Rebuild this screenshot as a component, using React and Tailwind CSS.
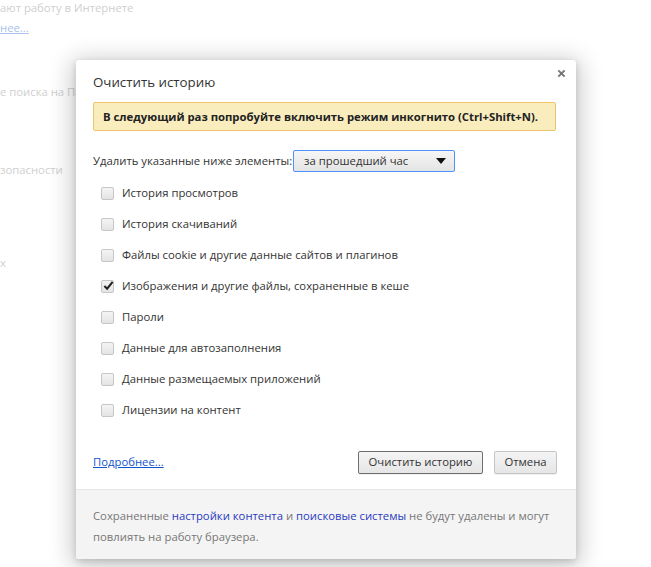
import React from 'react'

const items = [
	{label: 'История просмотров', checked: false},
	{label: 'История скачиваний', checked: false},
	{label: 'Файлы cookie и другие данные сайтов и плагинов', checked: false},
	{label: 'Изображения и другие файлы, сохраненные в кеше', checked: true},
	{label: 'Пароли', checked: false},
	{label: 'Данные для автозаполнения', checked: false},
	{label: 'Данные размещаемых приложений', checked: false},
	{label: 'Лицензии на контент', checked: false},
]

function Checkbox({checked}) {
	return (
		<span className="relative flex h-[13px] w-[13px] shrink-0 items-center justify-center rounded-[2px] border border-[#c6c6c6] bg-gradient-to-b from-[#f4f4f4] to-[#e4e4e4]">
			{checked && (
				<svg
					viewBox="0 0 12 12"
					className="absolute -top-[1px] left-[1px] h-[11px] w-[11px]"
				>
					<path
						d="M1.5 6.5 L4.5 9.5 L10.5 2"
						fill="none"
						stroke="#222"
						strokeWidth="2.2"
					/>
				</svg>
			)}
		</span>
	)
}

export default function App() {
	return (
		<div className="relative h-[567px] w-[651px] overflow-hidden bg-white font-['Open_Sans',sans-serif] text-[11.3px] text-[#cfcfcf]">
			{/* faded settings page behind the overlay */}
			<div className="flex flex-col">
				<div className="leading-[16px]">ают работу в Интернете</div>
				<div className="mt-[4px] leading-[16px] text-[#a9c1ec] underline">нее...</div>
				<div className="mt-[48px] leading-[16px]">е поиска на Пар</div>
				<div className="mt-[62px] leading-[16px]">зопасности</div>
				<div className="mt-[77px] leading-[16px]">х</div>
			</div>

			<div className="absolute left-[76px] top-[60px] flex w-[500px] flex-col overflow-hidden rounded-[3px] bg-white text-[#333] shadow-[0_4px_23px_5px_rgba(0,0,0,0.2),0_2px_6px_rgba(0,0,0,0.15)]">
				<div className="relative px-[17px] pt-[12px]">
					<div className="text-[13.3px] leading-[20px] text-[#333]">Очистить историю</div>
					<svg
						viewBox="0 0 10 10"
						className="absolute right-[10px] top-[9px] h-[9px] w-[9px]"
					>
						<path
							d="M1.5 1.5 L8.5 8.5 M8.5 1.5 L1.5 8.5"
							stroke="#777"
							strokeWidth="2.2"
						/>
					</svg>

					<div className="mr-[3px] mt-[10px] rounded-[2px] border border-[#f0c36d] bg-[#f9edbe] px-[9px] py-[5px] text-[11.3px] font-bold leading-[17px] text-[#222]">
						В следующий раз попробуйте включить режим инкогнито (Ctrl+Shift+N).
					</div>

					<div className="mt-[19px] flex h-[22px] items-center gap-[1px]">
						<span>Удалить указанные ниже элементы:</span>
						<div className="flex h-[22px] w-[162px] items-center justify-between rounded-[2px] border border-[#4d90fe] bg-gradient-to-b from-[#f6f6f6] to-[#e4e4e4] pl-[10px] pr-[8px] text-[#333]">
							<span>за прошедший час</span>
							<svg
								viewBox="0 0 10 6"
								className="h-[6px] w-[10px]"
							>
								<path
									d="M0 0 H10 L5 6 Z"
									fill="#111"
								/>
							</svg>
						</div>
					</div>

					<div className="mt-[6px] flex flex-col pl-[8px]">
						{items.map(item => (
							<div
								key={item.label}
								className="flex h-[31px] items-center gap-[8px]"
							>
								<Checkbox checked={item.checked} />
								<span>{item.label}</span>
							</div>
						))}
					</div>

					<div className="mt-[25px] flex items-center justify-between pb-[15px] pr-[2px]">
						<span className="text-[#15c] underline">Подробнее...</span>
						<div className="flex gap-[11px]">
							<button className="h-[23px] w-[125px] rounded-[2px] border border-[#6f6f6f] bg-gradient-to-b from-[#f4f4f4] to-[#e6e6e6] text-[11.3px] text-[#333] shadow-[0_1px_0_rgba(0,0,0,0.06)]">
								Очистить историю
							</button>
							<button className="h-[23px] w-[63px] rounded-[2px] border border-[#c4c4c4] bg-gradient-to-b from-[#f4f4f4] to-[#e6e6e6] text-[11.3px] text-[#333] shadow-[0_1px_0_rgba(0,0,0,0.06)]">
								Отмена
							</button>
						</div>
					</div>
				</div>

				<div className="border-t border-[#e6e6e6] bg-[#f4f4f4] px-[17px] pb-[12px] pt-[15px] leading-[21px] text-[#777]">
					Сохраненные <span className="text-[#2b3ac0]">настройки контента</span> и{' '}
					<span className="text-[#2b3ac0]">поисковые системы</span> не будут удалены и могут повлиять на работу
					браузера.
				</div>
			</div>
		</div>
	)
}
